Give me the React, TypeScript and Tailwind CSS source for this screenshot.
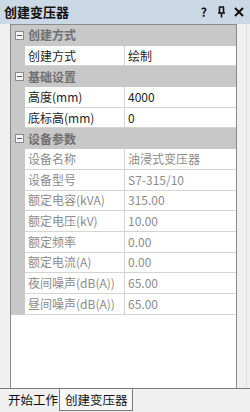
const cn = '"Microsoft YaHei", "Noto Sans CJK SC", "Noto Sans", sans-serif'

type Row = { label: string; value: string; disabled?: boolean }
type Section = { title: string; rows: Row[] }

const sections: Section[] = [
    { title: '创建方式', rows: [{ label: '创建方式', value: '绘制' }] },
    {
        title: '基础设置',
        rows: [
            { label: '高度(mm)', value: '4000' },
            { label: '底标高(mm)', value: '0' },
        ],
    },
    {
        title: '设备参数',
        rows: [
            { label: '设备名称', value: '油浸式变压器', disabled: true },
            { label: '设备型号', value: 'S7-315/10', disabled: true },
            { label: '额定电容(kVA)', value: '315.00', disabled: true },
            { label: '额定电压(kV)', value: '10.00', disabled: true },
            { label: '额定频率', value: '0.00', disabled: true },
            { label: '额定电流(A)', value: '0.00', disabled: true },
            { label: '夜间噪声(dB(A))', value: '65.00', disabled: true },
            { label: '昼间噪声(dB(A))', value: '65.00', disabled: true },
        ],
    },
]

function Minus() {
    return (
        <div className='w-[9px] h-[9px] border border-[#8a8a8a] bg-[#f4f4f4] flex items-center justify-center'>
            <div className='w-[5px] h-[1px] bg-[#555]' />
        </div>
    )
}

function Category({ title }: { title: string }) {
    return (
        <div className='h-[20.7px] flex items-center bg-[#c8c8c8]'>
            <div className='w-[14px] flex justify-center pl-[2px]'>
                <Minus />
            </div>
            <span className='pl-[3px] text-[12px] font-bold text-[#707070] leading-none'>{title}</span>
        </div>
    )
}

function PropRow({ row }: { row: Row }) {
    const color = row.disabled ? 'text-[#8c8c8c]' : 'text-[#1e1e1e]'
    return (
        <div className='h-[20.7px] flex bg-[#c8c8c8]'>
            <div className='w-[14px]' />
            <div className={`w-[100px] bg-white border-b border-r border-[#d4d4d4] flex items-center pl-[3px] text-[12px] leading-none ${color}`}>
                {row.label}
            </div>
            <div className={`flex-1 bg-white border-b border-[#d4d4d4] flex items-center pl-[3px] text-[12px] leading-none ${color}`}>
                {row.value}
            </div>
        </div>
    )
}

export default function App() {
    return (
        <div className='w-[250px] h-[412px] bg-[#f0f0f0] flex flex-col overflow-hidden' style={{ fontFamily: cn }}>
            <div className='h-[24px] bg-[#cbd8e5] flex items-center pl-[4px] pr-[6px]'>
                <span className='text-[13px] font-bold text-[#111]'>创建变压器</span>
                <span className='ml-auto text-[12px] font-bold text-[#111] leading-none'>?</span>
                <svg className='ml-[10px]' width='9' height='12' viewBox='0 0 9 12'>
                    <path d='M2 1h5M2.5 1v6M6.5 1v6M1 7h7M4.5 7v4.5' stroke='#111' strokeWidth='1.6' fill='none' />
                </svg>
                <svg className='ml-[8px]' width='10' height='10' viewBox='0 0 10 10'>
                    <path d='M1 1l8 8M9 1l-8 8' stroke='#111' strokeWidth='2' />
                </svg>
            </div>
            <div className='flex-1 flex pl-[10px]'>
                <div className='w-[227px] bg-white border-l border-r border-t border-[#8c8c8c] flex flex-col'>
                    {sections.map(s => (
                        <div key={s.title}>
                            <Category title={s.title} />
                            {s.rows.map(r => (
                                <PropRow key={r.label} row={r} />
                            ))}
                        </div>
                    ))}
                </div>
                <div className='flex-1 flex justify-end pr-[3px]'>
                    <div className='w-[1px] bg-[#dcdcdc]' />
                </div>
            </div>
            <div className='h-[24px] border-t border-[#7a7a7a] flex text-[12.5px] text-[#111]'>
                <div className='w-[59px] pl-[8px] pt-[2px] leading-[18px]'>开始工作</div>
                <div className='w-[74px] h-[22px] border-l border-r border-b border-[#7a7a7a] bg-[#f7f7f7] pl-[5px] pt-[2px] leading-[18px]'>
                    创建变压器
                </div>
            </div>
        </div>
    )
}
